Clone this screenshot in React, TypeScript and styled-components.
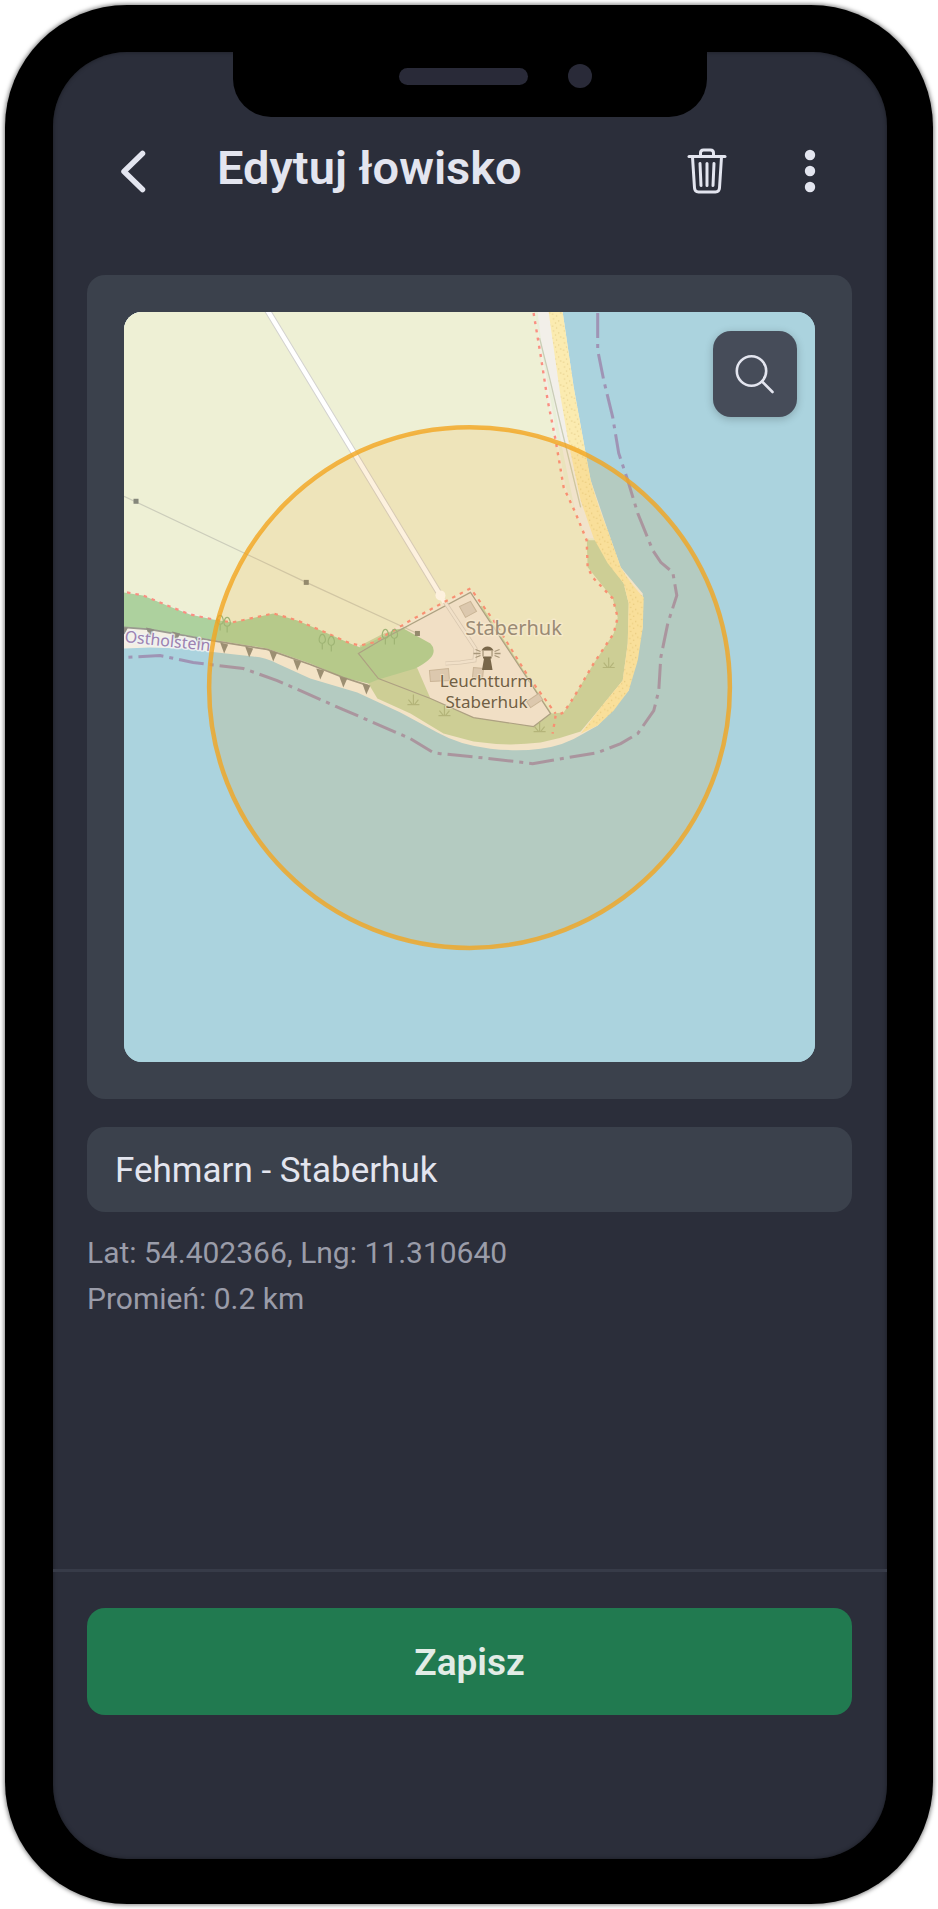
import React from 'react';
import styled, { createGlobalStyle } from 'styled-components';

const color = {
  screen: '#2b2e3a',
  panel: '#3b414c',
  text: '#e3e5ef',
  muted: '#9a9ca9',
  line: '#373b48',
  primary: '#217a50',
  overlay: '#464c59',
};

const GlobalStyle = createGlobalStyle`
  *, *::before, *::after { box-sizing: border-box; }
  body {
    margin: 0;
    background: #ffffff;
    font-family: Roboto, "Liberation Sans", sans-serif;
    color: ${color.text};
  }
`;

const Stage = styled.div`
  display: flex;
  min-height: 100vh;
  padding: 5px;
`;

const Phone = styled.div`
  flex: 1;
  display: flex;
  position: relative;
  padding: 47px 46px 45px 48px;
  background: #000000;
  border-radius: 122px;
  box-shadow: 0 0 4px 1px rgba(0, 0, 0, 0.5);
`;

const Notch = styled.div`
  position: absolute;
  top: 46px;
  left: 50%;
  width: 474px;
  height: 66px;
  margin-left: -236px;
  background: #000000;
  border-radius: 0 0 38px 38px;
`;

const Speaker = styled.span`
  position: absolute;
  top: 17px;
  left: 166px;
  width: 129px;
  height: 17px;
  border-radius: 9px;
  background: #292a38;
`;

const Camera = styled.span`
  position: absolute;
  top: 13px;
  left: 335px;
  width: 24px;
  height: 24px;
  border-radius: 50%;
  background: #292a38;
`;

const Screen = styled.main`
  flex: 1;
  min-width: 0;
  display: flex;
  flex-direction: column;
  background: ${color.screen};
  border-radius: 74px;
  overflow: hidden;
  box-shadow: inset 0 0 4px rgba(0, 0, 0, 0.4);
`;

const Header = styled.header`
  display: flex;
  align-items: flex-start;
  padding: 87px 45px 72px 48px;
`;

const Title = styled.h1`
  flex: 1;
  margin: 0;
  padding-left: 52px;
  font-size: 47px;
  line-height: 58px;
  font-weight: 600;
  white-space: nowrap;
`;

const HeaderActions = styled.div`
  display: flex;
  gap: 39px;
`;

const IconButton = styled.button`
  display: flex;
  align-items: center;
  justify-content: center;
  width: 64px;
  height: 64px;
  padding: 0;
  border: 0;
  background: transparent;
  color: ${color.text};
  cursor: pointer;
`;

const Content = styled.form`
  flex: 1;
  display: flex;
  flex-direction: column;
`;

const Fields = styled.div`
  flex: 1;
  padding: 0 35px 0 34px;
`;

const MapCard = styled.section`
  padding: 37px;
  margin-bottom: 28px;
  background: ${color.panel};
  border-radius: 18px;
`;

const MapFrame = styled.div`
  position: relative;
  border-radius: 18px;
  overflow: hidden;
  background: #aad3df;
  aspect-ratio: 690 / 749;
`;

const MapDrawing = styled.svg`
  display: block;
  width: 100%;
  height: 100%;
`;

const SearchButton = styled(IconButton)`
  position: absolute;
  top: 19px;
  right: 18px;
  width: 84px;
  height: 86px;
  border-radius: 18px;
  background: ${color.overlay};
  box-shadow: 0 2px 8px rgba(0, 0, 0, 0.22);
`;

const NameInput = styled.input`
  display: block;
  width: 100%;
  height: 85px;
  padding: 2px 28px 0;
  border: 0;
  border-radius: 18px;
  background: ${color.panel};
  color: ${color.text};
  font: 400 35px/44px Roboto, "Liberation Sans", sans-serif;
  outline: none;
`;

const Details = styled.div`
  padding-top: 18px;
  color: ${color.muted};
  font-size: 30px;
  line-height: 46px;
`;

const Detail = styled.p`
  margin: 0;
`;

const Footer = styled.footer`
  padding: 36px 35px 144px 34px;
  border-top: 3px solid ${color.line};
`;

const SaveButton = styled.button`
  display: block;
  width: 100%;
  height: 107px;
  padding: 2px 0 0;
  border: 0;
  border-radius: 18px;
  background: ${color.primary};
  color: #e2ece6;
  font: 600 37px/44px Roboto, "Liberation Sans", sans-serif;
  cursor: pointer;
`;

const BackIcon = () => (
  <svg width="64" height="64" viewBox="0 0 64 64" fill="none" stroke="currentColor" strokeWidth="5.500" strokeLinecap="round" strokeLinejoin="round" aria-hidden="true">
    <path d="M41.5 14.500 23 32.500 41.5 50.500" />
  </svg>
);

const TrashIcon = () => (
  <svg width="64" height="64" viewBox="0 0 64 64" fill="none" stroke="currentColor" strokeWidth="3" strokeLinecap="round" strokeLinejoin="round" aria-hidden="true">
    <path d="M14 17.5H50" />
    <path d="M25.5 17V14q0-3 3-3h7q3 0 3 3V17" />
    <path d="M17.500 18 19.500 49q.3 4 4 4h17q3.700 0 4-4l2-31" />
    <path d="M25 24.500 26 46.500M32 24.500v22M39 24.500 38 46.500" />
  </svg>
);

const MoreIcon = () => (
  <svg width="64" height="64" viewBox="0 0 64 64" fill="currentColor" aria-hidden="true">
    <circle cx="32" cy="16" r="5.200" />
    <circle cx="32" cy="32" r="5.200" />
    <circle cx="32" cy="48" r="5.200" />
  </svg>
);

const SearchIcon = () => (
  <svg width="48" height="48" viewBox="0 0 48 48" fill="none" stroke="currentColor" strokeWidth="2.6" strokeLinecap="round" aria-hidden="true">
    <circle cx="20.500" cy="21" r="14.700" />
    <path d="M31 31.500 41.500 42" />
  </svg>
);

const cliffs = [
  [150, 629], [176, 633], [199, 639], [224, 644], [249, 648],
  [273, 652], [297, 661], [320, 670], [343, 678], [366, 685],
];

const buildings = [
  'M459 606l11-5 6 10-11 6z',
  'M429 670l19-2 1 12-19 1z',
  'M473 667l10 1-1 10-10-1z',
  'M526 701l12-8 4 6-12 8z',
];

const grassTufts = [
  [413, 704], [444, 715], [539, 731], [608, 667],
];

const trees = [
  [220, 622], [227, 624], [322, 641], [331, 643], [385, 636], [394, 636],
];

const shoreDots = [[2, 2], [6, 4], [3, 7], [8, 9], [5, 11], [10, 1]];

const Map = () => (
  <MapDrawing viewBox="124 312 690 749" preserveAspectRatio="xMidYMid slice" role="img" aria-label="Mapa: Staberhuk">
    <defs>
      <pattern id="sand" width="11" height="12" patternUnits="userSpaceOnUse">
        <rect width="11" height="12" fill="#fbebb0" />
        {shoreDots.map(([x, y]) => (
          <circle key={`${x}-${y}`} cx={x} cy={y} r="0.7" fill="#e6cf8c" />
        ))}
      </pattern>
    </defs>

    <rect x="124" y="312" width="690" height="749" fill="#abd3de" />

    {/* shore strip under all land */}
    <path fill="#f4efe4" d="M124 312H562L573 387 585 453 590 480 607 530 620 567 642 593 642 627 628 690 597 725 583 733Q562 746 540 748 517 751 490 748 460 745 437 732L400 712 357 692 310 678 277 663Q265 657 253 656L217 652 183 648 150 647 124 648Z" />

    {/* scrub */}
    <path fill="#c8d7ab" d="M368 683L377 698 410 713 443 733 473 741Q507 746 540 742 560 738 580 731L600 707 622 680 627 643 628 603 623 583 612 560Q600 540 593 538 589 537 586 540V567L500 600 358 640Z" />

    {/* farmland */}
    <path fill="#eef0d5" d="M124 312H534L540 355 547 400 555 440 563 487 575 513 586 540 587 567 612 598 617 617 613 633 593 663 573 697 563 712 551 713 470 588 360 645 350 643 323 631 273 613 232 622 213 619 167 605 143 595 124 592Z" />

    {/* verge and access strip beside the beach */}
    <path fill="#e9efd8" d="M534 312L550 400 565 487 588 540 596 540 565 440 541 312Z" />
    <path fill="#f2efe9" d="M537 312H549L561 397 570 443 582 500 595 538H586L575 513 563 455 553 400 541 345Z" />
    <path fill="none" stroke="#c9cdb6" strokeWidth="1.3" d="M539 338L549 378 560 425 571 470 580 507" />

    {/* beach */}
    <path fill="url(#sand)" d="M548 312H562L573 387 585 453 590 480Q598 508 607 530L620 567Q630 584 643 597L642 627 637 660 628 690 613 710 597 725 580 733 600 707 622 680 627 643 628 603 623 583 607 563 593 538 580 500 568 443 560 397Z" />

    {/* residential ground */}
    <path fill="#f1eae2" d="M390 636L470 592 550 713 533 726 473 717 430 698 417 668Z" />

    {/* forest */}
    <path fill="#add19e" d="M124 592L143 595 167 605 190 614 213 619 232 622 255 617 273 613 297 620 323 631 350 643 360 647 396 629 403 628 430 643Q434 647 433 652 432 659 415 668L378 679 368 683 343 677 310 663 267 648 217 640 150 629 124 627Z" />

    {/* cliff */}
    <path fill="none" stroke="#9a9a90" strokeWidth="1.8" d="M124 627L150 629 217 641 267 649 310 664 343 677 368 685" />
    {cliffs.map(([x, y]) => (
      <path key={x} fill="#8f8d82" d={`M${x - 4} ${y - 2}l8 2-4 9z`} />
    ))}
    <path fill="#8f8d82" d="M124 627h4l-3 6-1 1z" />

    {/* power line */}
    <path fill="none" stroke="#cccdbb" strokeWidth="1.2" d="M124 496L306 582 417 633" />
    {[[136, 501], [306, 582], [417, 633]].map(([x, y]) => (
      <rect key={x} x={x - 2.5} y={y - 2.5} width="5" height="5" fill="#85877b" />
    ))}

    {/* fence */}
    <path fill="none" stroke="#a3a294" strokeWidth="1.2" d="M358 653L380 640 470 592 550 713 533 726 473 717 430 698 378 678Z" />

    {/* buildings */}
    {buildings.map((d) => (
      <path key={d} d={d} fill="#d9d0c7" stroke="#c4b9ac" strokeWidth="1" />
    ))}

    {/* road and driveway */}
    <path fill="none" stroke="#d6d0ca" strokeWidth="4" d="M440 595L475 648 474 660 460 662 445 663" />
    <path fill="none" stroke="#f2ece6" strokeWidth="2.400" d="M440 595L475 648 474 660 460 662 445 663" />
    <path fill="none" stroke="#d3d2cf" strokeWidth="6.500" d="M267 310L440 595" />
    <circle cx="440" cy="595" r="5" fill="#ffffff" />
    <path fill="none" stroke="#ffffff" strokeWidth="4.500" d="M267 310L440 595 444 602" />

    {/* footpaths */}
    <path fill="none" stroke="#fa8f82" strokeWidth="2.200" strokeDasharray="3.500 5" d="M127 592L143 595 167 605 190 614 213 619 232 622 255 617 273 613 297 620 323 631 350 643 360 645 373 642 410 620 443 602 470 588 493 620 527 675 555 713" />
    <path fill="none" stroke="#fa8f82" strokeWidth="2.400" strokeDasharray="3 5.300" d="M533 313L540 355 547 400 555 440 563 487 575 513 586 540 587 567 592 577 612 598 617 617 613 633 593 663 573 697 563 712 555 715 552 733" />

    {/* vegetation marks */}
    {grassTufts.map(([x, y]) => (
      <path key={x} fill="none" stroke="#aab98a" strokeWidth="1.2" d={`M${x - 6} ${y}h12M${x} ${y}v-10M${x - 1} ${y}l-4-5M${x + 1} ${y}l4-5`} />
    ))}
    {trees.map(([x, y]) => (
      <path key={x} fill="none" stroke="#92b985" strokeWidth="1.2" d={`M${x} ${y + 8}v-6q-4-1-3-5 1-4 3-4t3 4q1 4-3 5`} />
    ))}

    {/* administrative boundary */}
    <path fill="none" stroke="#9c84aa" strokeWidth="3" strokeDasharray="25 6 4 6" strokeOpacity="0.8" d="M597 313V350L603 380 612 417 618 453 627 480 637 513 652 550 660 562 672 572 676 595 667 623 660 657 658 690 653 710 637 733 620 743 597 752 567 757 532 763 490 758 440 753 433 752 410 738 343 709 277 680 243 668 193 662 160 655 124 657" />

    {/* lighthouse */}
    <path fill="#655e52" d="M481 650q2-4 6-4t6 4zM482.500 656h8.500v2h-1l2 11.500H481.500l2-11.500h-1z" />
    <path fill="none" stroke="#9d978b" strokeWidth="1.300" d="M482.500 650v6M491.500 650v6M480 651l-5-2M480 653h-7M480 655l-5 2M494 651l5-2M494 653h6M494 655l5 2" />

    {/* place names */}
    <g fontFamily='"Noto Sans", "Open Sans", sans-serif' textAnchor="middle" paintOrder="stroke" strokeLinejoin="round">
      <text x="513" y="635" fontSize="20" fill="#8c8885" stroke="#fbf9f0" strokeOpacity="0.7" strokeWidth="3">Staberhuk</text>
      <g fontSize="17" fill="#5c564c" stroke="#f5f1ea" strokeOpacity="0.7" strokeWidth="2">
        <text x="486" y="686">Leuchtturm</text>
        <text x="486" y="707">Staberhuk</text>
      </g>
      <text x="167" y="646" fontSize="16" fill="#9b80b0" stroke="#eef2f4" strokeOpacity="0.8" strokeWidth="3" transform="rotate(6 167 646)">Ostholstein</text>
    </g>

    {/* fishing spot radius */}
    <circle cx="469" cy="687" r="260" fill="#f09a18" fillOpacity="0.14" stroke="#f2a51f" strokeOpacity="0.8" strokeWidth="4.500" />
  </MapDrawing>
);

export default function App() {
  return (
    <>
      <GlobalStyle />
      <Stage>
        <Phone>
          <Screen>
            <Header>
              <IconButton type="button" aria-label="Wstecz">
                <BackIcon />
              </IconButton>
              <Title>Edytuj łowisko</Title>
              <HeaderActions>
                <IconButton type="button" aria-label="Usuń">
                  <TrashIcon />
                </IconButton>
                <IconButton type="button" aria-label="Więcej">
                  <MoreIcon />
                </IconButton>
              </HeaderActions>
            </Header>
            <Content onSubmit={(event) => event.preventDefault()}>
              <Fields>
                <MapCard>
                  <MapFrame>
                    <Map />
                    <SearchButton type="button" aria-label="Szukaj">
                      <SearchIcon />
                    </SearchButton>
                  </MapFrame>
                </MapCard>
                <NameInput type="text" aria-label="Nazwa łowiska" defaultValue="Fehmarn - Staberhuk" />
                <Details>
                  <Detail>Lat: 54.402366, Lng: 11.310640</Detail>
                  <Detail>Promień: 0.2 km</Detail>
                </Details>
              </Fields>
              <Footer>
                <SaveButton type="submit">Zapisz</SaveButton>
              </Footer>
            </Content>
          </Screen>
          <Notch>
            <Speaker />
            <Camera />
          </Notch>
        </Phone>
      </Stage>
    </>
  );
}
